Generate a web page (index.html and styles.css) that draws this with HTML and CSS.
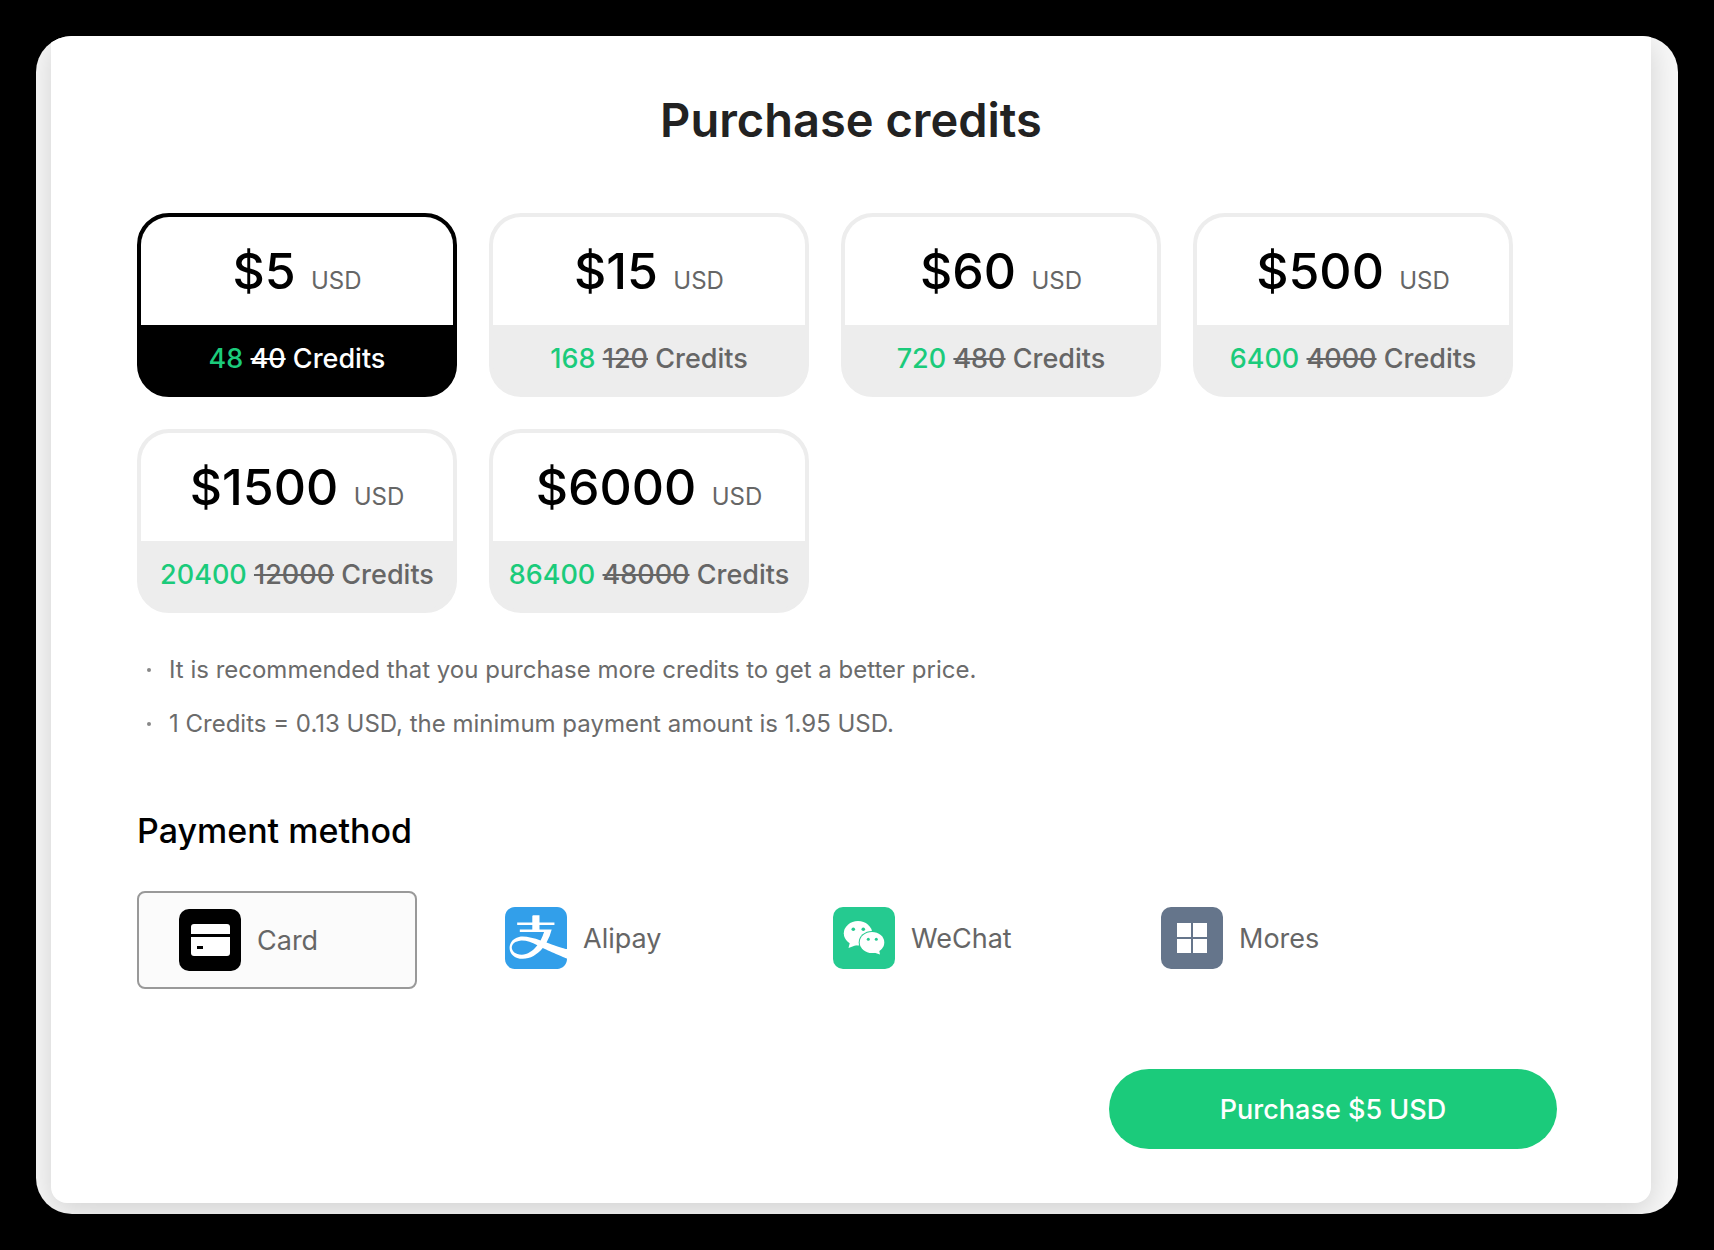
FILE: index.html
```html
<!DOCTYPE html>
<html lang="en">
<head>
  <meta charset="UTF-8" />
  <meta name="viewport" content="width=device-width, initial-scale=1.0" />
  <title>Purchase credits</title>
  <link rel="stylesheet" href="styles.css">
</head>
<body>
  <div class="window">
    <form class="panel">
      <h1>Purchase credits</h1>

      <div class="plans" role="radiogroup" aria-label="Credits">
        <label class="plan">
          <input type="radio" name="plan" value="5" checked />
          <span class="price">$5 <small>USD</small></span>
          <span class="credits"><b>48</b> <s>40</s> Credits</span>
        </label>
        <label class="plan">
          <input type="radio" name="plan" value="15" />
          <span class="price">$15 <small>USD</small></span>
          <span class="credits"><b>168</b> <s>120</s> Credits</span>
        </label>
        <label class="plan">
          <input type="radio" name="plan" value="60" />
          <span class="price">$60 <small>USD</small></span>
          <span class="credits"><b>720</b> <s>480</s> Credits</span>
        </label>
        <label class="plan">
          <input type="radio" name="plan" value="500" />
          <span class="price">$500 <small>USD</small></span>
          <span class="credits"><b>6400</b> <s>4000</s> Credits</span>
        </label>
        <label class="plan">
          <input type="radio" name="plan" value="1500" />
          <span class="price">$1500 <small>USD</small></span>
          <span class="credits"><b>20400</b> <s>12000</s> Credits</span>
        </label>
        <label class="plan">
          <input type="radio" name="plan" value="6000" />
          <span class="price">$6000 <small>USD</small></span>
          <span class="credits"><b>86400</b> <s>48000</s> Credits</span>
        </label>
      </div>

      <ul class="notes">
        <li>It is recommended that you purchase more credits to get a better price.</li>
        <li>1 Credits = 0.13 USD, the minimum payment amount is 1.95 USD.</li>
      </ul>

      <h2>Payment method</h2>
      <div class="methods" role="radiogroup" aria-label="Payment method">
        <label class="method">
          <input type="radio" name="method" value="card" checked />
          <svg class="icon" viewBox="0 0 62 62" aria-hidden="true">
            <rect width="62" height="62" rx="10" fill="#000" />
            <rect x="12" y="15" width="39" height="32" rx="3" fill="#fff" />
            <path d="M12 25h39v3H12zM18 37h6v3h-6z" fill="#000" />
          </svg>
          Card
        </label>
        <label class="method">
          <input type="radio" name="method" value="alipay" />
          <svg class="icon" viewBox="0.1 0 23.8 24" preserveAspectRatio="none" aria-hidden="true">
            <path fill="#329fea" d="M19.695 15.07c3.426 1.158 4.203 1.22 4.203 1.22V3.846c0-2.124-1.705-3.845-3.81-3.845H3.914C1.808.001.102 1.722.102 3.846v16.31c0 2.123 1.706 3.845 3.813 3.845h16.173c2.105 0 3.81-1.722 3.81-3.845v-.157s-6.19-2.602-9.315-4.119c-2.096 2.602-4.8 4.181-7.607 4.181-4.75 0-6.361-4.19-4.112-6.949.49-.602 1.324-1.175 2.617-1.497 2.025-.502 5.247.313 8.266 1.317a16.796 16.796 0 0 0 1.341-3.302H5.781v-.952h4.799V6.975H4.77v-.953h5.81V3.591s0-.409.411-.409h2.347v2.84h5.744v.951h-5.744v1.704h4.69a19.453 19.453 0 0 1-1.986 5.06c1.424.52 2.702 1.011 3.654 1.333m-13.81-2.032c-.596.06-1.71.325-2.321.869-1.83 1.608-.735 4.55 2.968 4.55 2.151 0 4.301-1.388 5.99-3.61-2.403-1.182-4.438-2.028-6.637-1.809" />
          </svg>
          Alipay
        </label>
        <label class="method">
          <input type="radio" name="method" value="wechat" />
          <svg class="icon" viewBox="0 0 62 62" aria-hidden="true">
            <rect width="62" height="62" rx="10" fill="#25ca90" />
            <path d="M15.500 41l1.500-6 6.500 3z" fill="#fff" />
            <ellipse cx="25" cy="26.300" rx="14.200" ry="12.200" fill="#fff" />
            <ellipse cx="39" cy="35.500" rx="13.300" ry="11.500" fill="#25ca90" />
            <ellipse cx="39" cy="35.500" rx="12.300" ry="10.500" fill="#fff" />
            <path d="M47 47.500l-1-5-5 3z" fill="#fff" />
            <g fill="#25ca90">
              <circle cx="20.300" cy="22.300" r="1.800" />
              <circle cx="30.300" cy="22.300" r="1.800" />
              <circle cx="35.300" cy="32.200" r="1.500" />
              <circle cx="43.300" cy="32.200" r="1.500" />
            </g>
          </svg>
          WeChat
        </label>
        <label class="method">
          <input type="radio" name="method" value="more" />
          <svg class="icon" viewBox="0 0 62 62" aria-hidden="true">
            <rect width="62" height="62" rx="10" fill="#65758b" />
            <path d="M16 16h14v14H16zM32 16h14v14H32zM16 32h14v14H16zM32 32h14v14H32z" fill="#fff" />
          </svg>
          Mores
        </label>
      </div>

      <button type="button" class="buy" id="buy">Purchase $5 USD</button>
    </form>
  </div>

  <script>
    const buy = document.getElementById('buy');

    document.querySelectorAll('input[name="plan"]').forEach((input) => {
      input.addEventListener('change', () => {
        buy.textContent = 'Purchase $' + input.value + ' USD';
      });
    });
  </script>
</body>
</html>
```
FILE: styles.css
```css
* {
  box-sizing: border-box;
}
body {
  margin: 0;
  padding: 36px;
  background: #000;
  color: #000;
  font-family: Inter, 'Helvetica Neue', Arial, sans-serif;
}
.window {
  padding: 0 27px 11px 15px;
  background: #f8f8f8;
  border-radius: 36px;
  overflow: hidden;
}
.panel {
  display: flex;
  flex-direction: column;
  padding: 54px 94px 54px 86px;
  background: #fff;
  border-radius: 0 0 16px 16px;
  box-shadow: 0 8px 32px rgba(0, 0, 0, 0.16);
}
h1 {
  margin: 0 -8px 63px 0;
  color: #222;
  font-size: 47px;
  font-weight: 600;
  line-height: 60px;
  text-align: center;
}
input[type="radio"] {
  appearance: none;
  width: 0;
  height: 0;
  margin: 0;
}

/* credit plans */
.plans {
  display: grid;
  grid-template-columns: repeat(auto-fill, 320px);
  gap: 32px;
}
.plan {
  display: flex;
  flex-direction: column;
  border: 4px solid #ededed;
  border-radius: 32px;
  background: #ededed;
  overflow: hidden;
  cursor: pointer;
}
.price {
  background: #fff;
  font-size: 50px;
  font-weight: 500;
  line-height: 108px;
  text-align: center;
}
.price small {
  margin-left: 2px;
  color: #666;
  font-size: 24px;
  font-weight: 400;
  line-height: 24px;
}
.credits {
  color: #666;
  font-size: 27px;
  font-weight: 500;
  line-height: 68px;
  text-align: center;
  white-space: nowrap;
}
.credits b {
  color: #1bcb7b;
  font-weight: 500;
}
.plan:has(:checked) {
  border-color: #000;
  background: #000;
}
.plan:has(:checked) .credits {
  color: #fff;
}

.notes {
  margin: 30px 0 56px;
  padding: 0;
  list-style: none;
  color: #6b6b6b;
  font-size: 24px;
  line-height: 54px;
}
.notes li {
  display: flex;
  align-items: center;
  gap: 18px;
  padding-left: 10px;
}
.notes li::before {
  content: '';
  width: 4px;
  height: 4px;
  border-radius: 50%;
  background: #888;
}

/* payment */
h2 {
  margin: 0 0 36px;
  font-size: 34px;
  font-weight: 500;
  line-height: 48px;
}
.methods {
  display: flex;
  flex-wrap: wrap;
  align-items: flex-start;
  gap: 48px;
}
.method {
  display: flex;
  align-items: center;
  width: 280px;
  padding: 16px 40px;
  border-radius: 8px;
  color: #666;
  font-size: 27px;
  cursor: pointer;
}
.method:has(:checked) {
  border: 2px solid #999;
  background: #fbfbfb;
}
.icon {
  width: 62px;
  height: 62px;
  margin-right: 16px;
}
.buy {
  align-self: flex-end;
  width: 448px;
  height: 80px;
  margin-top: 80px;
  border: none;
  border-radius: 40px;
  background: #1bcb7b;
  color: #fff;
  font-family: inherit;
  font-size: 27px;
  font-weight: 500;
  cursor: pointer;
}
.buy:hover {
  background: #17b86f;
}
```
